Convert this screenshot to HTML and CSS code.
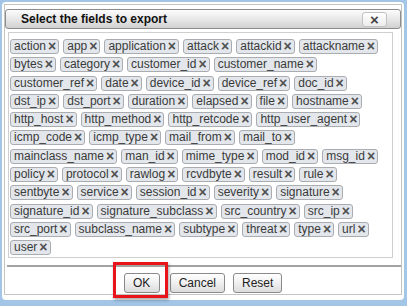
FILE: index.html
```html
<!DOCTYPE html>
<html lang="en">
<head>
    <meta charset="UTF-8">
    <meta name="viewport" content="width=device-width, initial-scale=1.0">
    <title>Select the fields to export</title>
    <link rel="stylesheet" href="styles.css">
</head>
<body>
    <div class="dialog">
        <div class="panel">
            <div class="titlebar">
                <span class="title">Select the fields to export</span>
                <span class="close">&times;</span>
            </div>
            <div class="fields">
                <span class="tag">action<b>&times;</b></span>
                <span class="tag">app<b>&times;</b></span>
                <span class="tag">application<b>&times;</b></span>
                <span class="tag">attack<b>&times;</b></span>
                <span class="tag">attackid<b>&times;</b></span>
                <span class="tag">attackname<b>&times;</b></span>
                <span class="tag">bytes<b>&times;</b></span>
                <span class="tag">category<b>&times;</b></span>
                <span class="tag">customer_id<b>&times;</b></span>
                <span class="tag">customer_name<b>&times;</b></span>
                <span class="tag">customer_ref<b>&times;</b></span>
                <span class="tag">date<b>&times;</b></span>
                <span class="tag">device_id<b>&times;</b></span>
                <span class="tag">device_ref<b>&times;</b></span>
                <span class="tag">doc_id<b>&times;</b></span>
                <span class="tag">dst_ip<b>&times;</b></span>
                <span class="tag">dst_port<b>&times;</b></span>
                <span class="tag">duration<b>&times;</b></span>
                <span class="tag">elapsed<b>&times;</b></span>
                <span class="tag">file<b>&times;</b></span>
                <span class="tag">hostname<b>&times;</b></span>
                <span class="tag">http_host<b>&times;</b></span>
                <span class="tag">http_method<b>&times;</b></span>
                <span class="tag">http_retcode<b>&times;</b></span>
                <span class="tag">http_user_agent<b>&times;</b></span>
                <span class="tag">icmp_code<b>&times;</b></span>
                <span class="tag">icmp_type<b>&times;</b></span>
                <span class="tag">mail_from<b>&times;</b></span>
                <span class="tag">mail_to<b>&times;</b></span>
                <span class="tag">mainclass_name<b>&times;</b></span>
                <span class="tag">man_id<b>&times;</b></span>
                <span class="tag">mime_type<b>&times;</b></span>
                <span class="tag">mod_id<b>&times;</b></span>
                <span class="tag">msg_id<b>&times;</b></span>
                <span class="tag">policy<b>&times;</b></span>
                <span class="tag">protocol<b>&times;</b></span>
                <span class="tag">rawlog<b>&times;</b></span>
                <span class="tag">rcvdbyte<b>&times;</b></span>
                <span class="tag">result<b>&times;</b></span>
                <span class="tag">rule<b>&times;</b></span>
                <span class="tag">sentbyte<b>&times;</b></span>
                <span class="tag">service<b>&times;</b></span>
                <span class="tag">session_id<b>&times;</b></span>
                <span class="tag">severity<b>&times;</b></span>
                <span class="tag">signature<b>&times;</b></span>
                <span class="tag">signature_id<b>&times;</b></span>
                <span class="tag">signature_subclass<b>&times;</b></span>
                <span class="tag">src_country<b>&times;</b></span>
                <span class="tag">src_ip<b>&times;</b></span>
                <span class="tag">src_port<b>&times;</b></span>
                <span class="tag">subclass_name<b>&times;</b></span>
                <span class="tag">subtype<b>&times;</b></span>
                <span class="tag">threat<b>&times;</b></span>
                <span class="tag">type<b>&times;</b></span>
                <span class="tag">url<b>&times;</b></span>
                <span class="tag">user<b>&times;</b></span>
            </div>
            <div class="separator"></div>
            <div class="buttons">
                <span class="highlight"><button class="btn">OK</button></span>
                <button class="btn">Cancel</button>
                <button class="btn">Reset</button>
            </div>
        </div>
    </div>
</body>
</html>
```

FILE: styles.css
```css
html, body {
    margin: 0;
    height: 306px;
    overflow: hidden;
}
body {
    background-color: #a3c5e6;
    font-family: "Liberation Sans", Arial, sans-serif;
    font-size: 12px;
    color: #333;
    padding-top: 2px;
    box-sizing: border-box;
}
.dialog {
    margin-left: 2px;
    width: 402px;
    height: 298px;
    background-color: #fff;
    border-radius: 4px;
    padding: 2px;
    box-sizing: border-box;
}
.panel {
    border: 1px solid #c4c4c4;
    padding: 4px 0 0 0;
}
.titlebar {
    display: flex;
    align-items: center;
    justify-content: space-between;
    height: 18px;
    border: 1px solid #8c8c8c;
    border-radius: 3px;
    background: linear-gradient(#fcfcfc, #e6e6e6 55%, #d0d0d0);
    padding: 0 13px 0 15px;
}
.title {
    font-weight: bold;
    color: #111;
}
.close {
    width: 23px;
    height: 13px;
    border: 1px solid #c2c2c2;
    border-radius: 3px;
    background: linear-gradient(#ffffff, #ececec);
    color: #444;
    font-size: 15px;
    font-weight: bold;
    line-height: 13px;
    text-align: center;
}
.fields {
    display: flex;
    flex-wrap: wrap;
    column-gap: 4px;
    row-gap: 3.3px;
    margin: 3px 8px 0 3px;
    padding: 6px 1px 2px 1px;
    border: 1px solid #cfcfcf;
}
.tag {
    display: inline-flex;
    align-items: center;
    height: 13px;
    line-height: 13px;
    padding: 0 2px 0 3px;
    border: 1px solid #a9acb0;
    border-radius: 3px;
    background-color: #e3e7ec;
    color: #3a3a3a;
    white-space: nowrap;
}
.tag b {
    margin-left: 2px;
    font-size: 14px;
    line-height: 13px;
    color: #505050;
}
.separator {
    height: 2px;
    margin: 7px 0 0 2px;
    background-color: #a2a2a2;
}
.buttons {
    display: flex;
    justify-content: center;
    gap: 8px;
    padding: 6px 0 1px 0;
}
.btn {
    height: 20px;
    padding: 0 8px;
    border: 1px solid #8a8a8a;
    border-radius: 3px;
    background: linear-gradient(#ffffff, #f0f0f0 50%, #dcdcdc);
    font-family: "Liberation Sans", Arial, sans-serif;
    font-size: 12px;
    color: #222;
}
.highlight {
    position: relative;
    display: inline-flex;
    margin-right: 2px;
}
.highlight .btn {
    width: 36px;
}
.highlight::after {
    content: "";
    position: absolute;
    left: -11px;
    right: -8px;
    top: -11px;
    bottom: -5px;
    border: 3px solid #e8141a;
    box-shadow: 1px 2px 3px rgba(0, 0, 0, 0.35);
    pointer-events: none;
}
```
